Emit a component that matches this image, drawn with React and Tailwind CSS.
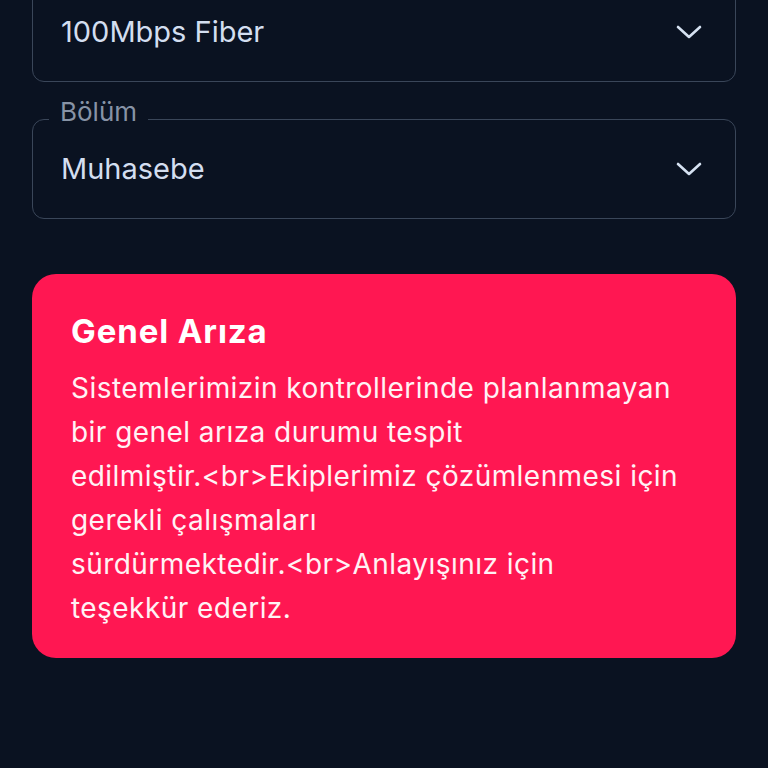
import React from 'react'

function Chevron() {
  return (
    <svg width="26" height="16" viewBox="0 0 26 16" fill="none" className="shrink-0 text-[#d6e2f2]">
      <polyline points="2,3 13,13 24,3" stroke="currentColor" strokeWidth="2.6" strokeLinecap="round" strokeLinejoin="round" />
    </svg>
  )
}

function SelectField({ label, value }) {
  return (
    <div className="relative h-[100px] rounded-xl border border-[#3a4659] flex items-center justify-between pl-7 pr-[33px]">
      {label && (
        <span className="absolute -top-[26px] left-[16px] px-[11px] bg-[#0a1221] text-[26px] leading-[36px] text-[#8793a6]">
          {label}
        </span>
      )}
      <span className="text-[29px] text-[#d3def0]">{value}</span>
      <Chevron />
    </div>
  )
}

export default function App() {
  return (
    <div className="min-h-screen bg-[#0a1221] font-['Inter',sans-serif] overflow-hidden">
      <div className="px-8 -mt-[18px] flex flex-col">
        <SelectField value="100Mbps Fiber" />
        <div className="mt-[37px]">
          <SelectField label="Bölüm" value="Muhasebe" />
        </div>

        {/* alert card */}
        <div className="mt-[55px] rounded-[24px] bg-[#ff1752] pl-[39px] pr-[30px] pt-[36px] pb-[28px] text-white">
          <h2 className="text-[33px] font-bold leading-[42px] tracking-[0.9px]">Genel Arıza</h2>
          <p className="mt-[14px] text-[28px] leading-[44px] tracking-[0.45px] text-[#fff2f5]">
            Sistemlerimizin kontrollerinde planlanmayan bir genel arıza durumu tespit{' '}
            <span className="whitespace-nowrap">edilmiştir.&lt;br&gt;Ekiplerimiz</span> çözümlenmesi için gerekli çalışmaları{' '}
            <span className="whitespace-nowrap">sürdürmektedir.&lt;br&gt;Anlayışınız</span> için
            <br />
            teşekkür ederiz.
          </p>
        </div>
      </div>
    </div>
  )
}
